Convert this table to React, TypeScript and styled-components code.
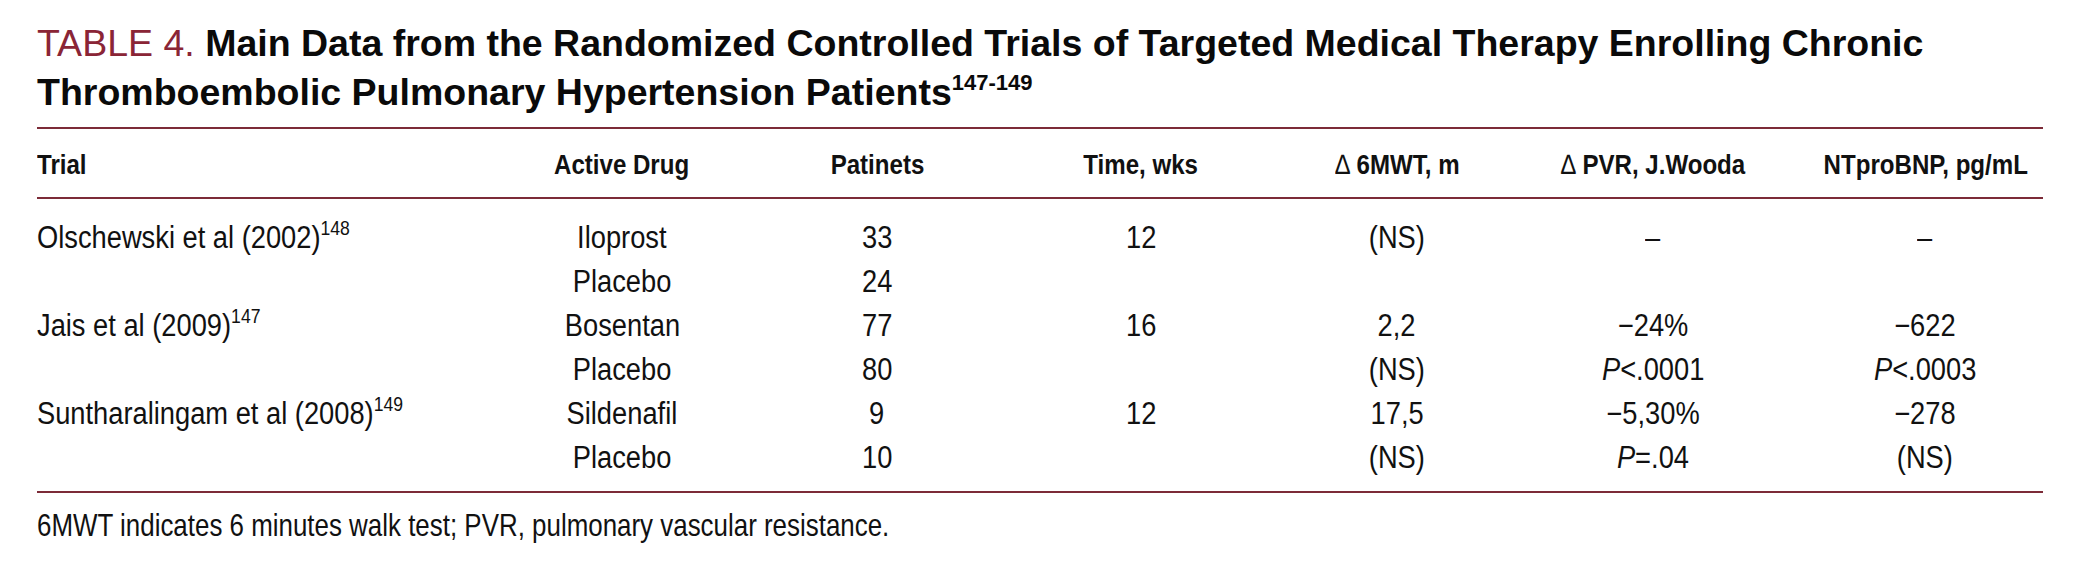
import React from "react";
import styled, { createGlobalStyle } from "styled-components";

const Global = createGlobalStyle`
  html, body { margin: 0; padding: 0; background: #ffffff; }
  body { width: 2079px; height: 579px; overflow: hidden; }
`;

const MAROON = "#7c2b38";
const SANS = `"Liberation Sans", Arial, sans-serif`;

const Page = styled.div`
  padding: 19px 36px 0 37px;
  width: 2006px;
  color: #111;
`;

const Title = styled.h1`
  margin: 0;
  font-family: ${SANS};
  font-size: 37.5px;
  line-height: 49px;
  font-weight: 700;
  color: #0a0a0a;
  white-space: nowrap;
`;

const Label = styled.span`
  font-weight: 400;
  color: #8a2536;
`;

const TitleSup = styled.sup`
  font-size: 22px;
  line-height: 0;
  vertical-align: 15px;
`;

const Table = styled.div`
  margin-top: 10px;
  border-top: 2px solid ${MAROON};
  border-bottom: 2px solid ${MAROON};
`;

const Grid = styled.div`
  display: grid;
  grid-template-columns: 440px 290px 220px 308px 204px 308px 236px;
`;

const Head = styled(Grid)`
  padding: 19px 0 15px;
  border-bottom: 2px solid ${MAROON};
`;

const Body = styled.div`
  padding: 17px 0 11px;
`;

/* Condensed look: the installed sans has no narrow face, so squeeze it horizontally */
const Squeeze = styled.span<{ $k: number; $left?: boolean }>`
  display: inline-block;
  transform: scaleX(${(p) => p.$k});
  transform-origin: ${(p) => (p.$left ? "left" : "center")} center;
`;

const HeadCell = styled.div<{ $left?: boolean }>`
  font-family: ${SANS};
  font-weight: 700;
  font-size: 28px;
  line-height: 34px;
  text-align: ${(p) => (p.$left ? "left" : "center")};
  white-space: nowrap;
`;

const Delta = styled.span`
  font-weight: 400;
`;

const Cell = styled.div<{ $left?: boolean }>`
  font-family: ${SANS};
  font-size: 31px;
  line-height: 44px;
  text-align: ${(p) => (p.$left ? "left" : "center")};
  white-space: nowrap;
`;

const Ref = styled.sup`
  font-size: 20px;
  line-height: 0;
  vertical-align: 13px;
`;

const Ital = styled.i`
  font-style: italic;
`;

const Note = styled.p`
  margin: 0;
  padding-top: 12px;
  font-family: ${SANS};
  font-size: 32px;
  line-height: 40px;
  white-space: nowrap;
`;

type Row = {
  trial?: React.ReactNode;
  drug: string;
  n: string;
  time?: string;
  mwt?: React.ReactNode;
  pvr?: React.ReactNode;
  bnp?: React.ReactNode;
};

const rows: Row[] = [
  {
    trial: (
      <>
        Olschewski et al (2002)<Ref>148</Ref>
      </>
    ),
    drug: "Iloprost",
    n: "33",
    time: "12",
    mwt: "(NS)",
    pvr: "–",
    bnp: "–",
  },
  { drug: "Placebo", n: "24" },
  {
    trial: (
      <>
        Jais et al (2009)<Ref>147</Ref>
      </>
    ),
    drug: "Bosentan",
    n: "77",
    time: "16",
    mwt: "2,2",
    pvr: "−24%",
    bnp: "−622",
  },
  {
    drug: "Placebo",
    n: "80",
    mwt: "(NS)",
    pvr: (
      <>
        <Ital>P</Ital>&lt;.0001
      </>
    ),
    bnp: (
      <>
        <Ital>P</Ital>&lt;.0003
      </>
    ),
  },
  {
    trial: (
      <>
        Suntharalingam et al (2008)<Ref>149</Ref>
      </>
    ),
    drug: "Sildenafil",
    n: "9",
    time: "12",
    mwt: "17,5",
    pvr: "−5,30%",
    bnp: "−278",
  },
  {
    drug: "Placebo",
    n: "10",
    mwt: "(NS)",
    pvr: (
      <>
        <Ital>P</Ital>=.04
      </>
    ),
    bnp: "(NS)",
  },
];

const headers: React.ReactNode[] = [
  "Active Drug",
  "Patinets",
  "Time, wks",
  <>
    <Delta>∆</Delta> 6MWT, m
  </>,
  <>
    <Delta>∆</Delta> PVR, J.Wooda
  </>,
  "NTproBNP, pg/mL",
];

const HK = 0.86;
const BK = 0.88;

export default function App() {
  return (
    <>
      <Global />
      <Page>
        <Title>
          <Label>TABLE 4.</Label> Main Data from the Randomized Controlled Trials of Targeted Medical
          Therapy Enrolling Chronic
          <br />
          Thromboembolic Pulmonary Hypertension Patients<TitleSup>147-149</TitleSup>
        </Title>
        <Table>
          <Head>
            <HeadCell $left>
              <Squeeze $k={HK} $left>
                Trial
              </Squeeze>
            </HeadCell>
            {headers.map((h, i) => (
              <HeadCell key={i}>
                <Squeeze $k={HK}>{h}</Squeeze>
              </HeadCell>
            ))}
          </Head>
          <Body>
            {rows.map((r, i) => (
              <Grid key={i}>
                <Cell $left>
                  <Squeeze $k={BK} $left>
                    {r.trial}
                  </Squeeze>
                </Cell>
                {[r.drug, r.n, r.time, r.mwt, r.pvr, r.bnp].map((v, j) => (
                  <Cell key={j}>
                    <Squeeze $k={BK}>{v}</Squeeze>
                  </Cell>
                ))}
              </Grid>
            ))}
          </Body>
        </Table>
        <Note>
          <Squeeze $k={0.81} $left>
            6MWT indicates 6 minutes walk test; PVR, pulmonary vascular resistance.
          </Squeeze>
        </Note>
      </Page>
    </>
  );
}
